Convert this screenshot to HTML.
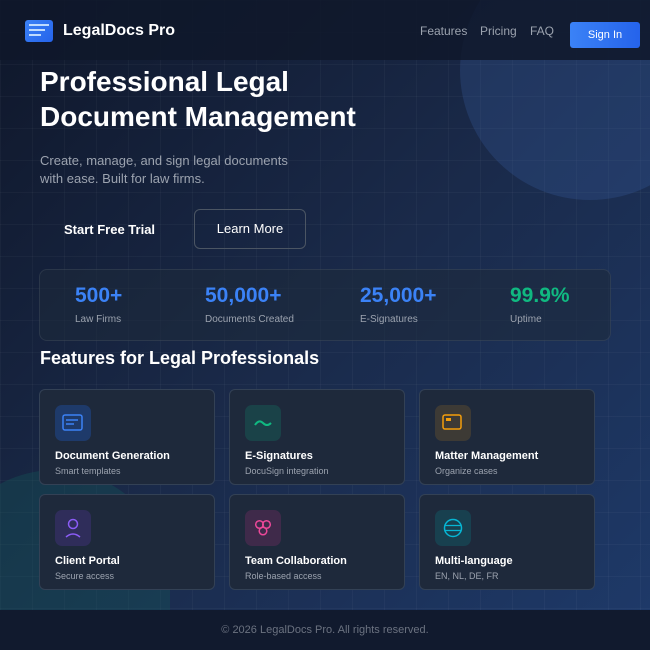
<!DOCTYPE html>
<html style="width:650px;height:650px;overflow:hidden"><head><meta charset="utf-8"><style>
*{margin:0;padding:0;box-sizing:border-box}
body{width:650px;height:650px;overflow:hidden;position:relative;font-family:"Liberation Sans",sans-serif;
background:linear-gradient(135deg,#0f172a 0%,#1a2a4a 50%,#1e3a6a 100%);color:#fff}
.grid{position:absolute;inset:0;background-image:linear-gradient(rgba(255,255,255,.03) 1px,transparent 1px),linear-gradient(90deg,rgba(255,255,255,.03) 1px,transparent 1px);background-size:32px 32px}
.circ1{position:absolute;left:460px;top:-60px;width:260px;height:260px;border-radius:50%;background:rgba(59,100,170,.25)}
.circ2{position:absolute;left:-60px;top:470px;width:230px;height:180px;border-radius:115px 115px 0 0;background:rgba(20,90,90,.35)}
.nav{position:absolute;left:0;top:0;width:650px;height:60px;background:rgba(15,23,42,.85)}
.logo{position:absolute;left:25px;top:20px;width:28px;height:22px;border-radius:3px;background:linear-gradient(135deg,#3b82f6,#2563eb)}
.logo i{position:absolute;left:4px;height:2px;background:#bfdbfe}
.brand{position:absolute;left:63px;top:22px;font-size:16px;font-weight:bold}
.nl{position:absolute;top:24px;font-size:12px;color:#9ca3af}
.sign{position:absolute;left:570px;top:22px;width:70px;height:26px;border-radius:3px;background:linear-gradient(90deg,#3b82f6,#2563eb);font-size:11px;text-align:center;line-height:26px}
h1{position:absolute;left:40px;top:64px;font-size:28px;line-height:35px;font-weight:bold}
.sub{position:absolute;left:40px;top:152px;font-size:13px;line-height:18px;color:#9ca3af}
.b1{position:absolute;left:64px;top:222px;font-size:13px;font-weight:bold}
.b2{position:absolute;left:194px;top:209px;width:112px;height:40px;border:1.5px solid #4b5563;border-radius:6px;text-align:center;line-height:37px;font-size:13px}
.stats{position:absolute;left:39px;top:269px;width:572px;height:72px;border:1px solid rgba(255,255,255,.08);border-radius:8px;background:rgba(30,41,59,.55)}
.sv{position:absolute;top:284px;font-size:21px;font-weight:bold;color:#3b82f6}
.sl{position:absolute;top:314px;font-size:10px;color:#9ca3af}
h2{position:absolute;left:40px;top:348px;font-size:18px;font-weight:bold}
.card{position:absolute;width:176px;height:96px;border:1px solid #334155;border-radius:6px;background:#1e293b}
.ic{position:absolute;left:15px;top:15px;width:36px;height:36px;border-radius:7px}
.ic svg{position:absolute;left:0;top:0}
.ct{position:absolute;left:15px;top:60px;font-size:11px;font-weight:bold}
.cs{position:absolute;left:15px;top:76px;font-size:9px;color:#9ca3af}
.foot{position:absolute;left:0;top:610px;width:650px;height:40px;background:#111a2e;text-align:center;line-height:40px;font-size:11px;color:#6b7280}
</style></head><body>
<div class="grid"></div><div class="circ1"></div><div class="circ2"></div>
<div class="nav"></div>
<div class="logo"><i style="top:4px;width:20px"></i><i style="top:9px;width:16px"></i><i style="top:14px;width:12px"></i></div>
<div class="brand">LegalDocs Pro</div>
<div class="nl" style="left:420px">Features</div><div class="nl" style="left:480px">Pricing</div><div class="nl" style="left:530px">FAQ</div>
<div class="sign">Sign In</div>
<h1>Professional Legal<br>Document Management</h1>
<div class="sub">Create, manage, and sign legal documents<br>with ease. Built for law firms.</div>
<div class="b1">Start Free Trial</div>
<div class="b2">Learn More</div>
<div class="stats"></div>
<div class="sv" style="left:75px">500+</div><div class="sl" style="left:75px">Law Firms</div>
<div class="sv" style="left:205px">50,000+</div><div class="sl" style="left:205px">Documents Created</div>
<div class="sv" style="left:360px">25,000+</div><div class="sl" style="left:360px">E-Signatures</div>
<div class="sv" style="left:510px;color:#10b981">99.9%</div><div class="sl" style="left:510px">Uptime</div>
<h2>Features for Legal Professionals</h2>

<div class="card" style="left:39px;top:389px"><div class="ic" style="background:#1e3a6a"><svg width="36" height="36"><rect x="8" y="10" width="19" height="15" rx="2" fill="none" stroke="#3b82f6" stroke-width="1.5"/><path d="M11 15h12M11 19h8" stroke="#3b82f6" stroke-width="1.5"/></svg></div><div class="ct">Document Generation</div><div class="cs">Smart templates</div></div>
<div class="card" style="left:229px;top:389px"><div class="ic" style="background:#1a4248"><svg width="36" height="36"><path d="M10 20q4-6 8-2t8 0" fill="none" stroke="#10b981" stroke-width="2"/></svg></div><div class="ct">E-Signatures</div><div class="cs">DocuSign integration</div></div>
<div class="card" style="left:419px;top:389px"><div class="ic" style="background:#3d3a35"><svg width="36" height="36"><rect x="8" y="10" width="18" height="14" rx="2" fill="none" stroke="#f59e0b" stroke-width="1.5"/><rect x="11" y="13" width="5" height="3" fill="#f59e0b"/></svg></div><div class="ct">Matter Management</div><div class="cs">Organize cases</div></div>
<div class="card" style="left:39px;top:494px"><div class="ic" style="background:#2f2d5a"><svg width="36" height="36"><circle cx="18" cy="14" r="4.5" fill="none" stroke="#8b5cf6" stroke-width="1.5"/><path d="M11 27q7-6 14 0" fill="none" stroke="#8b5cf6" stroke-width="1.5"/></svg></div><div class="ct">Client Portal</div><div class="cs">Secure access</div></div>
<div class="card" style="left:229px;top:494px"><div class="ic" style="background:#3f2a4a"><svg width="36" height="36"><circle cx="14.5" cy="14.5" r="3.8" fill="none" stroke="#ec4899" stroke-width="1.5"/><circle cx="21.5" cy="14.5" r="3.8" fill="none" stroke="#ec4899" stroke-width="1.5"/><circle cx="18" cy="21" r="3.8" fill="none" stroke="#ec4899" stroke-width="1.5"/></svg></div><div class="ct">Team Collaboration</div><div class="cs">Role-based access</div></div>
<div class="card" style="left:419px;top:494px"><div class="ic" style="background:#18404f"><svg width="36" height="36"><circle cx="18" cy="18" r="8.5" fill="none" stroke="#06b6d4" stroke-width="1.5"/><path d="M9.5 15.5h17M9.5 20.5h17" stroke="#06b6d4" stroke-width="1.2"/></svg></div><div class="ct">Multi-language</div><div class="cs">EN, NL, DE, FR</div></div>
<div class="foot">© 2026 LegalDocs Pro. All rights reserved.</div>
</body></html>
